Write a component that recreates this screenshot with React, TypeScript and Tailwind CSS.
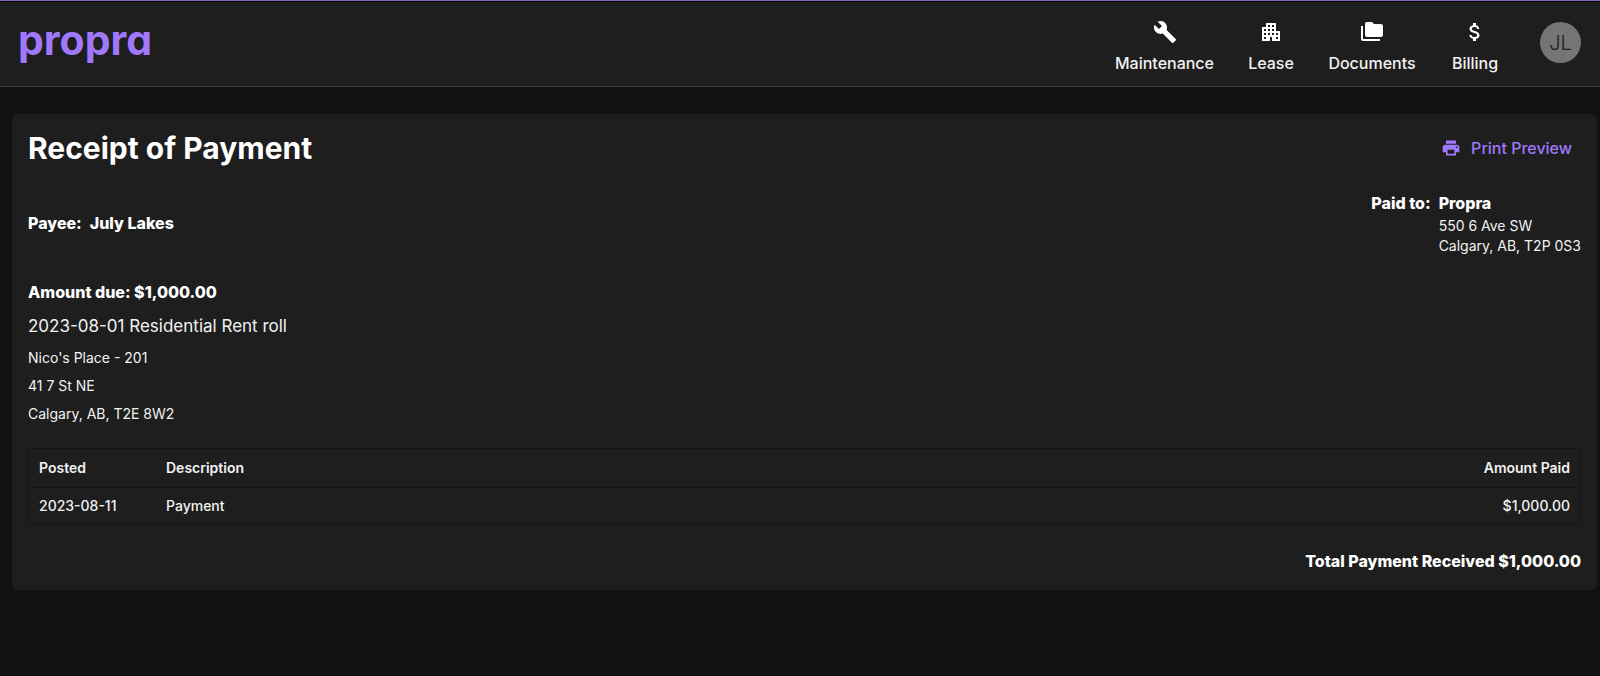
import type { IconType } from "react-icons";
import {
  MdApartment,
  MdAttachMoney,
  MdBuild,
  MdFolderCopy,
  MdPrint,
} from "react-icons/md";

interface NavItem {
  label: string;
  icon: IconType;
  width: string;
}

const navItems: NavItem[] = [
  { label: "Maintenance", icon: MdBuild, width: "min-w-[103px]" },
  { label: "Lease", icon: MdApartment, width: "min-w-[46px]" },
  { label: "Documents", icon: MdFolderCopy, width: "min-w-[92px]" },
  { label: "Billing", icon: MdAttachMoney, width: "min-w-[50px]" },
];

const payments = [
  { posted: "2023-08-11", description: "Payment", amount: "$1,000.00" },
];

function Header() {
  return (
    <header className="border-t border-[#8664bd] bg-[#1e1e1e]">
      <div className="flex h-[86px] items-start justify-between border-t border-t-black border-b border-b-[#3a3a3d] pr-[19px] pl-[18px]">
        {/* cv11 is Inter's single-storey "a" */}
        <a
          href="/"
          className="pt-[14px] text-[41px] leading-[48px] font-bold text-[#a078fc] [font-feature-settings:'cv11']"
        >
          propra
        </a>
        <div className="flex items-start">
          <nav className="flex gap-8 pt-[18px]">
            {navItems.map(({ label, icon: Icon, width }) => (
              <a
                key={label}
                href={`/${label.toLowerCase()}`}
                className={`flex flex-col items-center gap-[9px] ${width}`}
              >
                <Icon className="size-6 text-white" />
                <span className="text-base leading-5 font-medium">{label}</span>
              </a>
            ))}
          </nav>
          <button
            type="button"
            className="mt-5 ml-10 size-[41px] rounded-full bg-[#757575] text-xl font-light text-[#1e1e1e]"
          >
            JL
          </button>
        </div>
      </div>
    </header>
  );
}

/** Table of the payments applied to the amount due */
function PaymentTable() {
  return (
    <div className="mt-6 overflow-hidden rounded-sm border border-[#151515]">
      <table className="w-full text-left text-sm leading-5">
        <thead>
          <tr className="border-b border-[#151515]">
            <th className="w-[127px] px-[10px] py-[9px] font-semibold">Posted</th>
            <th className="px-[10px] py-[9px] font-semibold">Description</th>
            <th className="px-[10px] py-[9px] text-right font-semibold">
              Amount Paid
            </th>
          </tr>
        </thead>
        <tbody>
          {payments.map((payment) => (
            <tr key={payment.posted} className="font-medium">
              <td className="px-[10px] py-2">{payment.posted}</td>
              <td className="px-[10px] py-2">{payment.description}</td>
              <td className="px-[10px] py-2 text-right">{payment.amount}</td>
            </tr>
          ))}
        </tbody>
      </table>
    </div>
  );
}

export default function App() {
  return (
    <div className="min-h-screen bg-[#111111] font-[Inter,sans-serif] text-[#f2f2f2]">
      <Header />

      <main className="mt-[27px] mr-[3px] ml-3 rounded-md bg-[#1e1e1e] px-4 pb-[17px]">
        {/* Title */}
        <div className="flex items-start justify-between pt-4">
          <h1 className="text-3xl leading-9 font-bold text-white">
            Receipt of Payment
          </h1>
          <button
            type="button"
            className="mt-2 mr-[9px] flex items-center gap-[10px] text-base leading-5 font-medium text-[#a078fc]"
          >
            <MdPrint className="size-5" />
            Print Preview
          </button>
        </div>

        {/* Payee and recipient */}
        <div className="mt-6 flex items-center justify-between">
          <p className="flex gap-2 text-base font-extrabold text-white">
            <span>Payee:</span>
            <span>July Lakes</span>
          </p>
          <div className="flex gap-2">
            <span className="text-base leading-[26px] font-extrabold text-white">
              Paid to:
            </span>
            <div className="text-sm">
              <p className="text-base leading-[26px] font-extrabold text-white">
                Propra
              </p>
              <p>550 6 Ave SW</p>
              <p>Calgary, AB, T2P 0S3</p>
            </div>
          </div>
        </div>

        {/* Amount due */}
        <div className="mt-6 text-sm">
          <p className="text-base font-extrabold text-white">
            Amount due: $1,000.00
          </p>
          <p className="mt-2 text-[17px] leading-7">
            2023-08-01 Residential Rent roll
          </p>
          <p className="mt-2">Nico's Place - 201</p>
          <p className="mt-2">41 7 St NE</p>
          <p className="mt-2">Calgary, AB, T2E 8W2</p>
        </div>

        <PaymentTable />

        <p className="mt-6 text-right text-base font-extrabold text-white">
          Total Payment Received $1,000.00
        </p>
      </main>
    </div>
  );
}
